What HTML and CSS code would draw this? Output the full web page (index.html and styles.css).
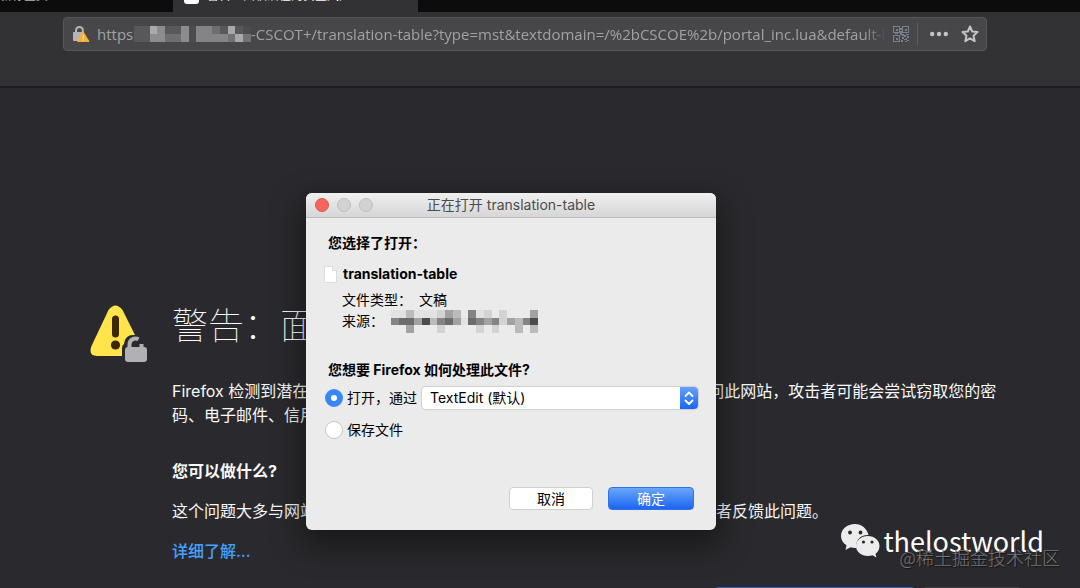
FILE: index.html
```html
<!DOCTYPE html>
<html lang="zh-CN">
<head>
    <meta charset="utf-8">
    <title>警告：面临潜在的安全风险</title>
    <link rel="stylesheet" href="styles.css">
</head>
<body>
    <header>
        <div class="tabs">
            <div class="tab tab-first">新标签页</div>
            <div class="tab tab-active"><span class="favicon"></span>警告：面临潜在的安全风险</div>
            <div class="tab">+</div>
        </div>
        <div class="toolbar">
            <div class="urlbar">
                <svg class="lock" viewBox="0 0 18 18">
                    <path d="M4 8V5.500a3.500 3.500 0 0 1 6.800-1.200" fill="none" stroke="#b4b4b6" stroke-width="2"/>
                    <path d="M10.800 4v4" stroke="#b4b4b6" stroke-width="2"/>
                    <rect x="1" y="7" width="11" height="9" rx="1" fill="#b4b4b6"/>
                    <path d="M11 6.500L17 16.500H5.500z" fill="#f6b03c" stroke="#f6b03c" stroke-linejoin="round"/>
                    <path d="M11.200 10v3.500M11.200 14.500v1.200" stroke="#fbe3b4" stroke-width="1.200"/>
                </svg>
                <label for="url">https</label>
                <svg class="mosaic-url" viewBox="0 0 15 2" preserveAspectRatio="none" shape-rendering="crispEdges">
                    <rect width="15" height="2" fill="#58585a"/>
                    <path d="M2 0h1v1h-1z" fill="#aaa"/>
                    <path d="M3 0h1v1h-1zM6 0h1v2h-1zM2 1h2v1h-2z" fill="#8c8c8e"/>
                    <path d="M5 1h1v1h-1zM10 0h1v1h-1zM4 1h1v1h-1z" fill="#6e6e70"/>
                    <path d="M8 0h2v2h-2zM10 1h1v1h-1zM11 1h1v1h-1z" fill="#848486"/>
                    <path d="M12 0h1v1h-1zM13 1h1v1h-1z" fill="#a8a8aa"/>
                    <path d="M12 1h1v1h-1zM14 1h1v1h-1z" fill="#727274"/>
                    <path d="M7 0h1v2h-1zM14 0h1v1h-1z" fill="#4c4c4e"/>
                </svg>
                <input type="text" id="url" value="-CSCOT+/translation-table?type=mst&amp;textdomain=/%2bCSCOE%2b/portal_inc.lua&amp;default-language">
                <button class="icon-button" aria-label="二维码">
                    <svg width="16" height="16" viewBox="0 0 16 16" fill="#77828e" shape-rendering="crispEdges">
                        <path fill-rule="evenodd" d="M0 0h7v7h-7zM1 1v5h5v-5zM9 0h7v7h-7zM10 1v5h5v-5zM0 9h7v7h-7zM1 10v5h5v-5z"/>
                        <path d="M3 3h2v2h-2zM12 3h2v2h-2zM3 12h2v2h-2zM7 2h2v2h-2zM7 5h2v4h-2zM9 8h2v2h-2zM11 9h2v2h-2zM13 8h3v1h-3zM14 10h2v2h-2zM9 11h2v2h-2zM11 13h2v1h-2zM13 12h1v2h-1zM8 14h2v2h-2zM12 15h2v1h-2zM14 14h2v1h-2zM2 7h3v1h-3z"/>
                    </svg>
                </button>
                <span class="divider"></span>
                <button class="icon-button more" aria-label="更多">
                    <svg width="18" height="6" viewBox="0 0 18 6" fill="#c4c4c6"><circle cx="2.200" cy="3" r="2.200"/><circle cx="9" cy="3" r="2.200"/><circle cx="15.800" cy="3" r="2.200"/></svg>
                </button>
                <button class="icon-button" aria-label="收藏">
                    <svg width="18" height="18" viewBox="0 0 18 18"><path d="M9 1.500l2.200 5 5.300.600-4 3.600 1.200 5.500L9 13.400l-4.700 2.800 1.200-5.500-4-3.600 5.300-.600z" fill="none" stroke="#c4c4c6" stroke-width="2" stroke-linejoin="round"/></svg>
                </button>
            </div>
        </div>
    </header>

    <main class="error-page">
        <svg class="warning" viewBox="0 0 58 58">
            <path d="M18.500 5Q25.500-4 32.500 5L50 40Q53 51 44 51H7Q-2 51 1.500 41z" fill="#ffe54b"/>
            <path d="M25.500 14v15" stroke="#3e2800" stroke-width="7" stroke-linecap="round"/>
            <circle cx="25.500" cy="40" r="4.600" fill="#3e2800"/>
            <path d="M32 60V43q0-3 2-4 1-9 9-9h17v30z" fill="#2a2a2e"/>
            <path d="M39.500 44V39.500a6 6 0 0 1 9-5.200M51.500 44v-5" fill="none" stroke="#b1b1b3" stroke-width="4"/>
            <rect x="35" y="42" width="22" height="15" rx="3" fill="#b1b1b3"/>
        </svg>
        <div class="content">
            <h1>警告：面临潜在的安全风险</h1>
            <p class="intro">Firefox 检测到潜在的安全威胁，并因此阻止了您继续访问此站点。如果您访问此网站，攻击者可能会尝试窃取您的密码、电子邮件、信用卡信息等内容。</p>
            <h2>您可以做什么?</h2>
            <p>这个问题大多与网站有关，您无需为此做任何操作。您可以向网站的维护管理者反馈此问题。</p>
            <p><a href="#">详细了解...</a></p>
            <div class="page-buttons">
                <button class="back">返回上一页（推荐）</button>
                <button class="advanced">高级...</button>
            </div>
        </div>
    </main>

    <form class="dialog">
        <div class="titlebar">
            <div class="lights">
                <span class="light close"></span>
                <span class="light"></span>
                <span class="light"></span>
            </div>
            <div class="title">正在打开 translation-table</div>
        </div>
        <div class="dialog-body">
            <h3>您选择了打开：</h3>
            <div class="file">
                <svg width="13" height="17" viewBox="0 0 13 17"><path d="M.5.500h8l4 4v12H.500z" fill="#fff" stroke="#dcdcdc"/><path d="M8.500.500v4h4" fill="#f0f0f0" stroke="#dcdcdc"/></svg>
                <strong>translation-table</strong>
            </div>
            <dl>
                <div class="detail">
                    <dt>文件类型：</dt>
                    <dd>文稿</dd>
                </div>
                <div class="detail">
                    <dt>来源：</dt>
                    <dd class="source">
                        <svg width="147" height="23" viewBox="0 0 19 3" preserveAspectRatio="none" shape-rendering="crispEdges">
                            <path d="M0 0h2v1h-2zM3 0h3v1h-3zM9 1h1v1h-1zM11 0h1v1h-1z" fill="#e2e2e2"/>
                            <path d="M6 0h1v1h-1zM12 0h1v1h-1zM14 0h1v2h-1zM11 2h1v1h-1zM13 2h1v1h-1zM6 2h1v1h-1z" fill="#d3d3d3"/>
                            <path d="M2 0h1v1h-1zM8 0h1v1h-1zM5 1h1v1h-1zM16 1h1v2h-1zM18 2h1v1h-1z" fill="#bbb"/>
                            <path d="M7 0h1v1h-1zM18 0h1v1h-1zM3 1h1v1h-1zM8 1h1v1h-1zM12 1h1v1h-1zM15 1h1v1h-1zM2 2h1v1h-1z" fill="#a2a2a2"/>
                            <path d="M0 1h1v1h-1zM6 1h1v1h-1zM10 0h1v1h-1zM11 1h1v1h-1zM13 1h1v1h-1zM17 1h1v1h-1z" fill="#848484"/>
                            <path d="M1 1h2v1h-2zM7 1h1v1h-1zM10 1h1v1h-1z" fill="#6c6c6c"/>
                            <path d="M4 1h1v1h-1zM18 1h1v1h-1z" fill="#4c4c4c"/>
                        </svg>
                    </dd>
                </div>
            </dl>
            <h3>您想要 Firefox 如何处理此文件?</h3>
            <div class="option">
                <input type="radio" name="action" id="open" checked>
                <label for="open">打开，通过</label>
                <div class="select">
                    <select aria-label="打开，通过">
                        <option>TextEdit (默认)</option>
                    </select>
                    <svg width="18" height="22" viewBox="0 0 18 22"><path d="M5.500 9L9 5.500 12.500 9M5.500 13.500L9 17l3.500-3.500" fill="none" stroke="#fff" stroke-width="1.800" stroke-linecap="round" stroke-linejoin="round"/></svg>
                </div>
            </div>
            <div class="option">
                <input type="radio" name="action" id="save">
                <label for="save">保存文件</label>
            </div>
            <div class="dialog-buttons">
                <button type="button">取消</button>
                <button type="button" class="ok">确定</button>
            </div>
        </div>
    </form>

    <div class="account">
        <svg width="40" height="34" viewBox="0 0 40 34">
            <path d="M14 0C6 0 0 5.300 0 12c0 4 2 7 5.500 9.300L4.500 26l5-2.700q3 .8 6 .6C14 16 20 10.500 27.500 11 26 4.500 20.500 0 14 0z" fill="#ececec"/>
            <path d="M27 12c-7 0-12 4.500-12 10s5 10 12 10q2.500 0 4.500-.7l4 2.200-1-3.600c2.500-2 4-4.700 4-7.900 0-5.500-5-10-11.500-10z" fill="#ececec"/>
            <g fill="#2a2a2e"><circle cx="9" cy="8.500" r="1.900"/><circle cx="19.500" cy="8.500" r="1.900"/><circle cx="22.500" cy="18" r="1.600"/><circle cx="31" cy="18" r="1.600"/></g>
        </svg>
        <span>thelostworld</span>
    </div>
    <div class="community">@稀土掘金技术社区</div>
</body>
</html>
```

FILE: styles.css
```css
* {
    box-sizing: border-box;
}

body {
    margin: 0;
    height: 100vh;
    overflow: hidden;
    position: relative;
    background-color: #2a2a2e;
    color: #f9f9fa;
    font-family: Inter, "Noto Sans CJK SC", sans-serif;
    font-size: 16px;
    line-height: 24px;
}

h1, h2, h3, p, dl, dd {
    margin: 0;
}

button, input, select {
    font: inherit;
    margin: 0;
}

/* browser bars */
.tabs {
    display: flex;
    align-items: flex-end;
    height: 12px;
    overflow: hidden;
    background-color: #0c0c0d;
}

.tab {
    display: flex;
    align-items: center;
    gap: 8px;
    height: 36px;
    padding: 4px 16px 0;
    color: #b1b1b3;
    font-size: 12px;
}

.tab-first {
    width: 173px;
    padding-left: 0;
}

.tab-active {
    width: 245px;
    padding-left: 11px;
    background-color: #323234;
    color: #f9f9fa;
}

.favicon {
    width: 15px;
    height: 15px;
    border-radius: 3px;
    background-color: #fff;
}

.toolbar {
    height: 76px;
    padding: 5px 93px 0 63px;
    background-color: #323234;
    border-bottom: 2px solid #1c1c1e;
}

.urlbar {
    display: flex;
    align-items: center;
    height: 34px;
    padding: 0 1px 0 8px;
    background-color: #474749;
    border: 1px solid #575759;
    border-radius: 4px;
    color: #a2a2a4;
    font-family: "Open Sans", sans-serif;
    font-size: 15px;
}

.lock {
    width: 18px;
    height: 18px;
    margin-right: 7px;
}

.mosaic-url {
    width: 117px;
    height: 16px;
    flex: none;
}

.urlbar label {
    width: 37px;
}

.urlbar input {
    flex: 1;
    min-width: 0;
    padding: 0;
    border: none;
    outline: none;
    background: none;
    color: inherit;
    -webkit-mask-image: linear-gradient(to left, transparent, #000 24px);
    mask-image: linear-gradient(to left, transparent, #000 24px);
}

.icon-button {
    display: flex;
    padding: 0 6px;
    border: none;
    background: none;
}

.more {
    padding: 0 7px 0 12px;
}

.divider {
    width: 1px;
    height: 22px;
    margin-left: 2px;
    background-color: #5e5e60;
}

/* certificate error page */
.error-page {
    display: grid;
    grid-template-columns: 58px 1fr;
    gap: 24px;
    padding: 214px 60px 0 90px;
}

.warning {
    width: 58px;
    height: 58px;
    margin-top: 3px;
}

h1 {
    margin-bottom: 29px;
    font-size: 36px;
    font-weight: 100;
    line-height: 48px;
}

.content p {
    margin-bottom: 16px;
    padding-right: 16px;
}

.content .intro {
    margin-bottom: 32px;
}

h2 {
    margin-bottom: 16px;
    font-size: 16px;
    font-weight: bold;
}

a {
    color: #45a1ff;
    font-weight: 500;
    text-decoration: none;
}

.page-buttons {
    display: flex;
    justify-content: flex-end;
    gap: 10px;
    padding-top: 8px;
}

.page-buttons button {
    height: 32px;
    border: none;
    border-radius: 2px;
    color: #fff;
}

.page-buttons .back {
    width: 198px;
    background-color: #2f62b8;
}

.page-buttons .advanced {
    width: 96px;
    background-color: #404044;
}

/* download dialog */
.dialog {
    position: absolute;
    top: 193px;
    left: 306px;
    width: 410px;
    border-radius: 6px;
    background-color: #ebebeb;
    box-shadow: 0 12px 30px 6px rgba(0, 0, 0, 0.4);
    color: #000;
    font-size: 14px;
    line-height: 20px;
}

.titlebar {
    display: grid;
    grid-template-columns: 1fr auto 1fr;
    align-items: center;
    height: 25px;
    padding: 0 9px;
    border-radius: 6px 6px 0 0;
    border-bottom: 1px solid #bcbcbc;
    background: linear-gradient(#f0f0f0, #d6d6d6);
}

.lights {
    display: flex;
    gap: 8px;
}

.light {
    width: 14px;
    height: 14px;
    border: 1px solid #bfbfbf;
    border-radius: 50%;
    background-color: #d2d2d2;
}

.light.close {
    border-color: #e0544c;
    background-color: #f4655d;
}

.title {
    color: #4c4c4c;
}

.dialog-body {
    padding: 15px 18px 20px;
}

h3 {
    padding-left: 4px;
    font-size: 14px;
    font-weight: bold;
}

.file {
    display: flex;
    align-items: center;
    gap: 6px;
    margin: 11px 0 6px;
}

dl {
    margin: 0 0 29px 18px;
}

.detail {
    display: flex;
    gap: 7px;
    margin-bottom: 1px;
}

.source {
    display: flex;
    align-items: center;
    height: 20px;
}

.option {
    display: flex;
    align-items: center;
    height: 32px;
    padding-left: 1px;
}

h3 + .option {
    margin-top: 2px;
}

.option input {
    appearance: none;
    width: 18px;
    height: 18px;
    margin-right: 4px;
    border: 1px solid #c6c6c6;
    border-radius: 50%;
    background-color: #fff;
}

.option input:checked {
    border: 6px solid #3b86f7;
}

.select {
    display: flex;
    flex: 1;
    height: 22px;
    margin-left: 5px;
    border-radius: 4px;
    overflow: hidden;
    background-color: #fff;
    box-shadow: 0 0 1px 1px rgba(0, 0, 0, 0.12);
}

.select select {
    appearance: none;
    flex: 1;
    min-width: 0;
    padding: 0 8px;
    border: none;
    background: none;
    color: #000;
}

.select svg {
    background: linear-gradient(#62a2f8, #1b66f3);
}

.dialog-buttons {
    display: flex;
    justify-content: flex-end;
    gap: 15px;
    padding: 41px 4px 0 0;
}

.dialog-buttons button {
    width: 84px;
    height: 23px;
    padding: 0;
    border: 1px solid #cfcfcf;
    border-radius: 4px;
    background-color: #fff;
    color: #000;
    line-height: 20px;
}

.dialog-buttons .ok {
    width: 86px;
    border-color: #2f72ec;
    background: linear-gradient(#68a7f9, #1d64f2);
    color: #fff;
}

/* watermarks */
.account {
    position: absolute;
    top: 523px;
    right: 36px;
    display: flex;
    align-items: center;
    gap: 2px;
    color: #fff;
    font-family: "Noto Sans CJK SC", sans-serif;
    font-size: 27px;
    line-height: 36px;
}

.community {
    position: absolute;
    right: 20px;
    bottom: 19px;
    color: #77777a;
    font-family: "Noto Sans CJK SC", sans-serif;
    font-size: 18px;
    font-weight: 300;
    text-shadow: 1px 1px 1px #111;
}
```
